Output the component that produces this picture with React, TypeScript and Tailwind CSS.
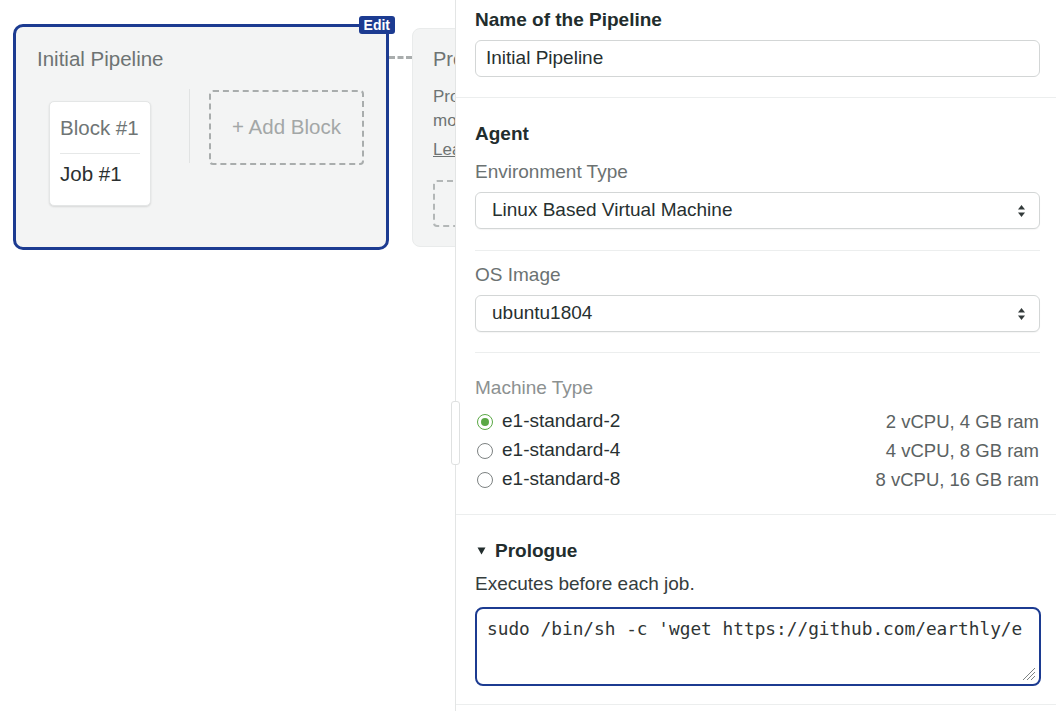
import React from 'react';

const machines = [
    { name: 'e1-standard-2', spec: '2 vCPU, 4 GB ram', checked: true },
    { name: 'e1-standard-4', spec: '4 vCPU, 8 GB ram', checked: false },
    { name: 'e1-standard-8', spec: '8 vCPU, 16 GB ram', checked: false },
];

function SelectArrows() {
    return (
        <svg width="9" height="14" viewBox="0 0 9 14" className="shrink-0">
            <path d="M4.5 1 L8 5.5 L1 5.5 Z" fill="#333a3a" />
            <path d="M4.5 13 L8 8.5 L1 8.5 Z" fill="#333a3a" />
        </svg>
    );
}

function FakeSelect({ value }: { value: string }) {
    return (
        <div className="mt-[8px] flex h-[37px] items-center justify-between rounded-[6px] border border-[#d3d6d6] bg-white pl-[16px] pr-[13px] shadow-[0_1px_1px_rgba(0,0,0,0.04)]">
            <span className="text-[19px] text-[#273030]">{value}</span>
            <SelectArrows />
        </div>
    );
}

function Radio({ checked }: { checked: boolean }) {
    if (checked) {
        return (
            <span className="ml-[2px] flex h-[16px] w-[16px] shrink-0 items-center justify-center rounded-full border-[1.5px] border-[#5aa845] bg-white">
                <span className="h-[8px] w-[8px] rounded-full bg-[#5aa845]" />
            </span>
        );
    }
    return <span className="ml-[2px] block h-[16px] w-[16px] shrink-0 rounded-full border-[1.5px] border-[#7d8282] bg-white" />;
}

function Canvas() {
    return (
        <div className="relative h-full w-[455px] shrink-0 overflow-hidden bg-white">
            <div className="flex items-start pl-[13px] pt-[24px]">
                {/* current pipeline */}
                <div className="relative h-[226px] w-[376px] shrink-0 rounded-[10px] border-[3px] border-[#1c3b91] bg-[#f3f4f4] px-[21px] pt-[20px]">
                    <span className="absolute -right-[9px] -top-[11px] rounded-[3px] bg-[#1c3b91] px-[5px] text-[14px] font-semibold leading-[18px] text-white">
                        Edit
                    </span>
                    <div className="text-[20.5px] leading-[24px] text-[#6d7373]">Initial Pipeline</div>
                    <div className="mt-[18px] flex items-start">
                        <div className="pl-[12px] pt-[12px]">
                            <div className="h-[105px] w-[102px] rounded-[5px] border border-[#e4e6e6] bg-white px-[10px] pt-[14px] shadow-[0_1px_2px_rgba(0,0,0,0.12)]">
                                <div className="whitespace-nowrap text-[20.5px] leading-[24px] text-[#6f7575]">Block #1</div>
                                <div className="mt-[13px] h-px bg-[#e6e8e8]" />
                                <div className="mt-[8px] text-[20.5px] leading-[24px] text-[#2b3030]">Job #1</div>
                            </div>
                        </div>
                        <div className="ml-[38px] h-[74px] w-px bg-[#e1e3e3]" />
                        <div className="ml-[19px] mt-[1px] flex h-[75px] w-[155px] items-center justify-center rounded-[4px] border-2 border-dashed border-[#a9adad] text-[20.5px] text-[#a3a7a7]">
                            + Add Block
                        </div>
                    </div>
                </div>

                <div className="mt-[32px] w-[23px] shrink-0 border-t-[3px] border-dashed border-[#a9adad]" />

                {/* promotions */}
                <div className="mt-[4px] h-[219px] w-[260px] shrink-0 rounded-[8px] border border-[#e9ebeb] bg-[#f3f4f4] px-[20px] pt-[18px]">
                    <div className="whitespace-nowrap text-[20px] leading-[24px] text-[#6d7373]">Promotions</div>
                    <p className="mt-[14px] whitespace-nowrap text-[17px] leading-[24px] text-[#6d7373]">
                        Promotions connect pipelines
                        <br />
                        more complex workflows.
                    </p>
                    <div className="mt-[5px] whitespace-nowrap text-[17px] leading-[24px] text-[#6d7373] underline">Learn more</div>
                    <div className="mt-[18px] h-[47px] w-[150px] rounded-[4px] border-2 border-dashed border-[#b3b7b7]" />
                </div>
            </div>
        </div>
    );
}

function Panel() {
    return (
        <div className="relative h-full w-[601px] shrink-0 border-l border-[#e3e5e5] bg-white">
            <div className="absolute -left-[5px] top-[401px] h-[64px] w-[9px] rounded-[3px] border border-[#dfe1e1] bg-white" />

            <section className="border-b border-[#eceeee] pb-[20px] pl-[19px] pr-[16px] pt-[8px]">
                <h2 className="text-[19px] font-bold leading-[24px] text-[#222d2d]">Name of the Pipeline</h2>
                <div className="mt-[8px] flex h-[37px] items-center rounded-[6px] border border-[#d3d6d6] px-[10px] text-[19px] text-[#273030]">
                    Initial Pipeline
                </div>
            </section>

            <section className="border-b border-[#eceeee] pb-[20px] pl-[19px] pr-[16px] pt-[24px]">
                <h2 className="text-[19px] font-bold leading-[24px] text-[#222d2d]">Agent</h2>
                <div className="mt-[14px] text-[19px] leading-[24px] text-[#6b7272]">Environment Type</div>
                <FakeSelect value="Linux Based Virtual Machine" />
                <div className="mt-[21px] h-px bg-[#eceeee]" />
                <div className="mt-[12px] text-[19px] leading-[24px] text-[#6b7272]">OS Image</div>
                <FakeSelect value="ubuntu1804" />
                <div className="mt-[20px] h-px bg-[#eceeee]" />
                <div className="mt-[23px] text-[19px] leading-[24px] text-[#8c9191]">Machine Type</div>
                <div className="mt-[7px]">
                    {machines.map((m) => (
                        <div key={m.name} className="flex h-[29px] items-center">
                            <Radio checked={m.checked} />
                            <span className="ml-[9px] text-[19px] text-[#283131]">{m.name}</span>
                            <span className="ml-auto pr-[1px] text-[18.5px] text-[#5b6262]">{m.spec}</span>
                        </div>
                    ))}
                </div>
            </section>

            <section className="border-b border-[#eceeee] pb-[18px] pl-[19px] pr-[15px] pt-[24px]">
                <div className="flex items-center">
                    <svg width="9" height="8" viewBox="0 0 9 8" className="ml-[2px]">
                        <path d="M0.5 0.5 L8.5 0.5 L4.5 7.5 Z" fill="#222d2d" />
                    </svg>
                    <h2 className="ml-[9px] text-[19px] font-bold leading-[24px] text-[#222d2d]">Prologue</h2>
                </div>
                <div className="mt-[9px] text-[19px] leading-[24px] text-[#353d3d]">Executes before each job.</div>
                <div className="relative mt-[11px] h-[79px] rounded-[8px] border-2 border-[#1c3b91] bg-white pl-[10px] pr-[12px] pt-[8px]">
                    <div className="overflow-hidden whitespace-nowrap font-['DejaVu_Sans_Mono',monospace] text-[17.8px] leading-[24px] text-[#303535]">
                        sudo /bin/sh -c 'wget https://github.com/earthly/e
                    </div>
                    <svg width="14" height="14" viewBox="0 0 14 14" className="pointer-events-none absolute bottom-[3px] right-[3px]">
                        <path d="M13 1 L1 13 M13 5 L5 13 M13 9 L9 13" stroke="#7d8282" strokeWidth="1" />
                    </svg>
                </div>
            </section>
        </div>
    );
}

export default function App() {
    return (
        <div className="flex h-[711px] w-[1056px] overflow-hidden bg-white font-['Liberation_Sans',Arial,sans-serif]">
            <Canvas />
            <Panel />
        </div>
    );
}
